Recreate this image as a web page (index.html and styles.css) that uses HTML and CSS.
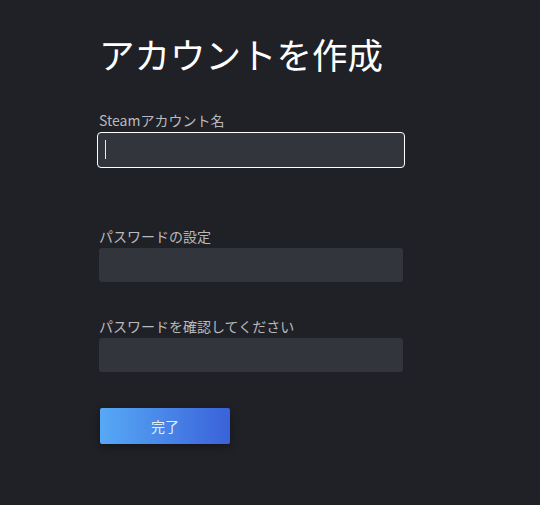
FILE: index.html
```html
<!DOCTYPE html>
<html lang="ja">
<head>
    <meta charset="UTF-8">
    <meta name="viewport" content="width=device-width, initial-scale=1.0">
    <title>アカウントを作成</title>
    <link rel="stylesheet" href="styles.css">
</head>
<body>
    <div class="create-container">
        <p class="main-title">アカウントを作成</p>

        <div class="field field-first">
            <label for="account" class="field-label">Steamアカウント名</label>
            <div class="input-wrap">
                <input type="text" id="account" class="field-input focused" autocomplete="off">
                <span class="caret"></span>
            </div>
        </div>

        <div class="field field-pass">
            <label for="password" class="field-label">パスワードの設定</label>
            <input type="password" id="password" class="field-input" autocomplete="off">
        </div>

        <div class="field field-confirm">
            <label for="confirm" class="field-label">パスワードを確認してください</label>
            <input type="password" id="confirm" class="field-input" autocomplete="off">
        </div>

        <button class="done-btn">完了</button>
    </div>
</body>
</html>
```

FILE: styles.css
```css
 * {
     font-family: "Noto Sans CJK JP", "Noto Sans", sans-serif;
     box-sizing: border-box;
 }

 body {
     margin: 0;
     background-color: #1f2127;
     height: 100vh;
     overflow: hidden;
 }

 .create-container {
     display: flex;
     flex-direction: column;
     align-items: flex-start;
     padding: 28px 0 0 99px;
 }

 .create-container p.main-title {
     margin: 0;
     font-size: 35.5px;
     line-height: 52px;
     color: #ffffff;
     font-weight: 400;
 }

 .field {
     display: flex;
     flex-direction: column;
 }

 .field-first {
     margin-top: 30px;
 }

 .field-pass {
     margin-top: 58px;
 }

 .field-confirm {
     margin-top: 34px;
 }

 .field-label {
     font-size: 14px;
     line-height: 20px;
     color: #b9babd;
     margin-bottom: 2px;
 }

 .field-input {
     width: 304px;
     height: 34px;
     border: none;
     border-radius: 3px;
     background-color: #32353c;
     color: #ffffff;
     font-size: 15px;
     padding: 0 6px;
     outline: none;
 }

 /* 선택된 입력칸 */
 .input-wrap {
     position: relative;
     margin-left: -2px;
 }

 .field-input.focused {
     width: 308px;
     height: 36px;
     border: 1px solid #ffffff;
     border-radius: 4px;
 }

 .caret {
     position: absolute;
     left: 8px;
     top: 8px;
     width: 1px;
     height: 19px;
     background-color: #e8e8e8;
 }

 .done-btn {
     margin-top: 36px;
     margin-left: 1px;
     width: 130px;
     height: 36px;
     border: none;
     border-radius: 2px;
     background: linear-gradient(90deg, #57a9f6 0%, #3a62d9 100%);
     color: #e4ecf7;
     font-size: 14px;
     cursor: pointer;
     box-shadow: 0 3px 8px rgba(0, 0, 0, 0.35);
 }
```
